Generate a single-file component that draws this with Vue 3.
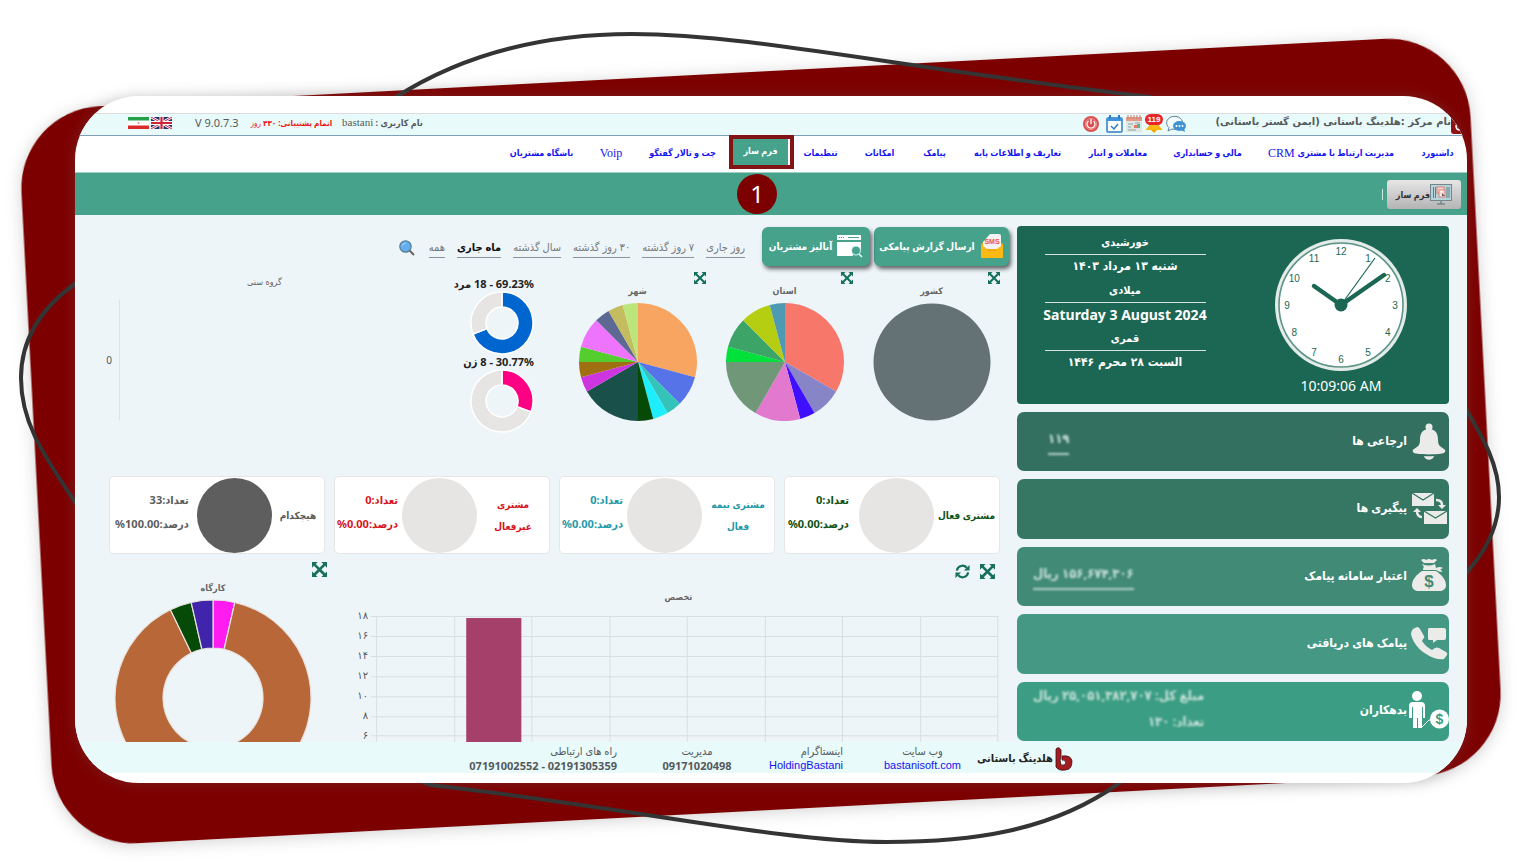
<script setup>
const navItems = [
  { label: 'داشبورد' },
  { label: 'مدیریت ارتباط با مشتری', latin: 'CRM' },
  { label: 'مالی و حسابداری' },
  { label: 'معاملات و انبار' },
  { label: 'تعاریف و اطلاعات پایه' },
  { label: 'پیامک' },
  { label: 'امکانات' },
  { label: 'تنظیمات' },
  { label: 'فرم ساز', active: true },
  { label: 'چت و تالار گفتگو' },
  { label: '', latin: 'Voip' },
  { label: 'باشگاه مشتریان' },
]

const ranges = [
  { label: 'روز جاری' },
  { label: '۷ روز گذشته' },
  { label: '۳۰ روز گذشته' },
  { label: 'سال گذشته' },
  { label: 'ماه جاری', active: true },
  { label: 'همه' },
]

const point = (r, turn) => {
  const a = turn * Math.PI * 2
  return `${(r * Math.sin(a)).toFixed(2)} ${(-r * Math.cos(a)).toFixed(2)}`
}

function slices(parts, outer, inner = 0) {
  const total = parts.reduce((sum, p) => sum + p[0], 0)
  let start = 0
  return parts.map(([value, color]) => {
    const end = start + value / total
    const large = end - start > 0.5 ? 1 : 0
    const back = inner
      ? `L${point(inner, end)} A${inner} ${inner} 0 ${large} 0 ${point(inner, start)}`
      : 'L0 0'
    const d = `M${point(outer, start)} A${outer} ${outer} 0 ${large} 1 ${point(outer, end)} ${back} Z`
    start = end
    return { d, color }
  })
}

const pies = [
  { title: 'کشور', full: '#647275', slices: [] },
  {
    title: 'استان',
    slices: slices([
      [8, '#f7786b'], [2, '#8884c8'], [1, '#3f10ff'], [3, '#e279cf'], [4, '#709878'],
      [1, '#02e03c'], [2, '#3da468'], [2, '#b5ce12'], [1, '#4e9ab2'],
    ], 59),
  },
  {
    title: 'شهر',
    slices: slices([
      [7, '#f7a560'], [2, '#5674e8'], [1, '#35c3b9'], [1, '#1eeefc'], [1, '#064a08'],
      [4, '#1a504a'], [1, '#cd35e0'], [1, '#a06f12'], [1, '#54cd2e'], [2, '#ee74fd'],
      [1, '#5d6993'], [1, '#c4bd60'], [1, '#bce67c'],
    ], 59),
  },
]

const genders = [
  { text: '69.23% - 18 مرد', slices: slices([[69.23, '#0066cf'], [30.77, '#e6e5e4']], 31, 16) },
  { text: '30.77% - 8 زن', slices: slices([[30.77, '#ff0084'], [69.23, '#e6e5e4']], 31, 16) },
]

const workshop = slices([[1, '#ff1cf0'], [25, '#b86838'], [1, '#064a08'], [1, '#4024ab']], 98, 50)

const groups = [
  { name: 'مشتری فعال', count: '0', share: '0.00%', tone: 'green' },
  { name: 'مشتری نیمه فعال', count: '0', share: '0.00%', tone: 'teal', wrap: true },
  { name: 'مشتری غیرفعال', count: '0', share: '0.00%', tone: 'red', wrap: true },
  { name: 'هیچکدام', count: '33', share: '100.00%', tone: 'gray' },
]

const yTicks = ['۱۸', '۱۶', '۱۴', '۱۲', '۱۰', '۸', '۶']

const hours = Array.from({ length: 12 }, (_, i) => {
  const a = ((i + 1) * Math.PI) / 6
  return { n: i + 1, x: 54 * Math.sin(a), y: -54 * Math.cos(a) + 4 }
})

const cards = [
  { id: 'refer', label: 'ارجاعی ها', values: ['۱۱۹'], link: true },
  { id: 'follow', label: 'پیگیری ها', values: [] },
  { id: 'credit', label: 'اعتبار سامانه پیامک', values: ['۱۵۶,۶۷۴,۳۰۶ ریال'], link: true },
  { id: 'inbox', label: 'پیامک های دریافتی', values: [] },
  { id: 'debt', label: 'بدهکاران', values: ['مبلغ کل: ۲۵,۰۵۱,۳۸۲,۷۰۷ ریال', 'تعداد: ۱۳۰'] },
]

const contacts = [
  { title: 'وب سایت', value: 'bastanisoft.com', href: '#' },
  { title: 'اینستاگرام', value: 'HoldingBastani', href: '#', edge: true },
  { title: 'مدیریت', value: '09171020498' },
  { title: 'راه های ارتباطی', value: '07191002552 - 02191305359', edge: true },
]
</script>

<template>
  <div class="stage">
    <svg class="backdrop" viewBox="0 0 1536 864" preserveAspectRatio="none" aria-hidden="true">
      <rect class="slab" x="35.5" y="72" width="1451" height="738" rx="82" transform="rotate(-3 761 441)" />
      <path
        class="loop"
        d="M396 97 C470 50 550 34 632 34 C750 34 900 68 1150 97 C1330 180 1400 300 1467 411 C1483 438 1499 465 1499 497 C1499 528 1484 553 1467 572 C1380 680 1230 700 1118 784 C1050 832 970 842 886 842 C780 842 620 806 430 785 C270 720 150 610 75 502 C40 450 21 420 21 378 C21 335 45 305 76 283 C200 220 300 160 396 97 Z"
      />
    </svg>

    <div class="panel" dir="rtl">
      <header class="topbar">
        <svg class="brand-chip" viewBox="0 0 12 20" aria-hidden="true">
          <path d="M0 0h12v20H3q-3 0-3-3z" fill="#8e1216" />
          <path d="M5 12q1-3 4-3v7q-4 0-4-4z" fill="none" stroke="#fff" stroke-width="1.500" />
        </svg>
        <p class="center-name">نام مرکز :هلدینگ باستانی (ایمن گستر باستانی)</p>
        <div class="tray">
          <button type="button" aria-label="گفتگو">
            <svg viewBox="0 0 20 18" width="20" height="18">
              <path d="M3 12.500 2 16l4-2a8 6.500 0 1 0-3-1.500z" fill="#f4fbfd" stroke="#63809a" stroke-width="1" />
              <ellipse cx="13.500" cy="11" rx="6.500" ry="5" fill="#3f93d4" />
              <path d="M15 15l4 2-1-4z" fill="#3f93d4" />
              <g fill="#fff"><circle cx="10.500" cy="11" r="1" /><circle cx="13.500" cy="11" r="1" /><circle cx="16.500" cy="11" r="1" /></g>
            </svg>
          </button>
          <button type="button" class="bell" aria-label="اعلان ها">
            <svg viewBox="0 0 18 20" width="18" height="20">
              <path d="M4 4h10v8l3 3v1H1v-1l3-3z" fill="#fdb511" />
              <path d="M6 16h6l-3 3z" fill="#f6a300" />
            </svg>
            <span class="count">119</span>
          </button>
          <button type="button" aria-label="رویدادها">
            <svg viewBox="0 0 16 18" width="16" height="18">
              <rect y="2" width="16" height="15" fill="#dfe6e4" />
              <rect y="2" width="16" height="4" fill="#e39a8a" />
              <path d="M2 0v4M5 0v4M8 0v4M11 0v4M14 0v4" stroke="#c87c6a" stroke-width="1" />
              <path d="M2 9h5M2 12h3M9 8h5M2 15h8" stroke="#8fa6a4" stroke-width="1" />
              <path d="M8 10h3v3H8z" fill="#e07a60" /><path d="M11 9h3v4h-3z" fill="#5cae9a" />
            </svg>
          </button>
          <button type="button" aria-label="تقویم">
            <svg viewBox="0 0 17 18" width="17" height="18">
              <rect x="1" y="3" width="15" height="14" rx="1" fill="#fff" stroke="#2b7cc4" stroke-width="1.500" />
              <path d="M1 3h15v3H1z" fill="#3d94dd" />
              <path d="M4 0v4M13 0v4" stroke="#2b7cc4" stroke-width="2" />
              <path d="M5 11l3 3 4-5" fill="none" stroke="#2b7cc4" stroke-width="1.500" />
            </svg>
          </button>
          <button type="button" aria-label="خروج">
            <svg viewBox="0 0 16 16" width="16" height="16">
              <circle cx="8" cy="8" r="8" fill="#dc4f50" />
              <path d="M5.500 5a4 4 0 1 0 5 0M8 3v5" fill="none" stroke="#fff" stroke-width="1.300" />
              <circle cx="8" cy="8" r="5.600" fill="none" stroke="#f0a7a4" stroke-width=".7" />
            </svg>
          </button>
        </div>
        <div class="account">
          <span><b>نام کاربری :</b> <span class="serif">bastani</span></span>
          <span class="expiry"><b>اتمام پشتیبانی: ۴۳۰</b> روز</span>
          <span class="version" dir="ltr">V 9.0.7.3</span>
          <span class="flags">
            <button type="button" aria-label="English">
              <svg viewBox="0 0 21 12" width="21" height="12">
                <rect width="21" height="12" fill="#24346c" />
                <path d="M0 0l21 12M21 0L0 12" stroke="#fff" stroke-width="2.600" />
                <path d="M0 0l21 12M21 0L0 12" stroke="#cf2338" stroke-width="1" />
                <path d="M10.500 0v12M0 6h21" stroke="#fff" stroke-width="4" />
                <path d="M10.500 0v12M0 6h21" stroke="#cf2338" stroke-width="2.200" />
              </svg>
            </button>
            <button type="button" aria-label="فارسی">
              <svg viewBox="0 0 21 12" width="21" height="12">
                <rect width="21" height="12" fill="#fff" />
                <rect width="21" height="3.500" fill="#26a04a" />
                <rect y="8.500" width="21" height="3.500" fill="#db2a2c" />
                <circle cx="10.500" cy="6" r="1" fill="#e08080" />
              </svg>
            </button>
          </span>
        </div>
      </header>

      <nav class="nav">
        <a v-for="(item, i) in navItems" :key="i" href="#" :class="{ active: item.active }">
          <span v-if="item.label">{{ item.label }}</span>
          <span v-if="item.latin" class="latin-word">{{ item.latin }}</span>
          <span v-if="item.active" class="frame" aria-hidden="true"></span>
          <span v-if="item.active" class="step">1</span>
        </a>
      </nav>

      <div class="ribbon">
        <button type="button" class="form-btn">
          <svg viewBox="0 0 22 21" width="22" height="21" aria-hidden="true">
            <rect x=".5" y=".5" width="21" height="16" fill="#b4d4da" stroke="#75868c" />
            <path d="M3.500 3v11M5.500 3v11M17 3v11M19 3v11" stroke="#5f8088" stroke-width="1" />
            <rect x="7" y="3" width="7" height="6" fill="#f3d9d3" stroke="#e07f70" />
            <rect x="9" y="6" width="6" height="7" fill="#fff" fill-opacity=".6" stroke="#e07f70" />
            <path d="M12 9l3 3h-3z" fill="#7b5050" />
            <path d="M11 17v3M7 20h8" stroke="#75868c" stroke-width="1.500" />
          </svg>
          <span>فرم ساز</span>
        </button>
        <span class="divider" aria-hidden="true"></span>
      </div>

      <div class="content">
        <aside class="side">
          <section class="clock-card">
            <div class="clock">
              <svg viewBox="-67 -67 134 134" width="134" height="134" role="img" aria-label="10:09:06">
                <circle r="66" fill="#e4ecea" />
                <circle r="62" fill="#fff" stroke="#5d9485" stroke-width="1.600" />
                <g class="hours">
                  <text v-for="h in hours" :key="h.n" :x="h.x" :y="h.y">{{ h.n }}</text>
                </g>
                <path d="M0 0L34-47" stroke="#1b6753" stroke-width="1.200" />
                <path d="M0 0L43-30M0 0L-27-19" stroke="#1b6753" stroke-width="4.500" stroke-linecap="round" />
                <circle r="6.500" fill="#1b6753" />
              </svg>
              <span class="time" dir="ltr">10:09:06 AM</span>
            </div>
            <dl class="dates">
              <dt>خورشیدی</dt>
              <dd>شنبه ۱۳ مرداد ۱۴۰۳</dd>
              <dt>میلادی</dt>
              <dd class="latin" dir="ltr">Saturday 3 August 2024</dd>
              <dt>قمری</dt>
              <dd>السبت ۲۸ محرم ۱۴۴۶</dd>
            </dl>
          </section>

          <section v-for="card in cards" :key="card.id" class="card" :class="card.id">
            <svg class="card-icon" viewBox="0 0 40 40" width="40" height="40" aria-hidden="true">
              <g v-if="card.id === 'refer'" fill="#ebebea">
                <circle cx="20" cy="5" r="3.500" />
                <path d="M20 7C13 7 11 12 11 18c0 6-3 7-6 9-2 1-2 4 2 4.500 8 1.200 18 1.200 26 0 4-.5 4-3.500 2-4.500-3-2-6-3-6-9 0-6-2-11-9-11z" />
                <path d="M15 34q5 .7 10 0c-1 5-9 5-10 0z" />
              </g>
              <g v-else-if="card.id === 'follow'">
                <rect x="3" y="4" width="22" height="13" fill="#ebebea" />
                <path d="M3 4l11 7 11-7" fill="none" stroke="#367764" stroke-width="1.400" />
                <rect x="15" y="22" width="23" height="13" fill="#ebebea" />
                <path d="M15 22l11.500 7L38 22" fill="none" stroke="#367764" stroke-width="1.400" />
                <path d="M27 11q6 0 6 5M13 28q-5 0-5-6" fill="none" stroke="#ebebea" stroke-width="2.500" />
                <path d="M29 16h8l-4 4zM4 23h8l-4-4z" fill="#ebebea" />
              </g>
              <g v-else-if="card.id === 'credit'" fill="#ebebea">
                <path d="M12 3q3-2 5 0 3-2 6 0 3-2 5 0l-3 3H15z" />
                <path d="M13 7q7 3 13 0l1 4q4-2 7 0-1 1-3 1 2 1 2 3-3 0-6-2H14q0-3 1-3z" />
                <path d="M13 14h14c6 4 10 9 10 14 0 4-3 6-7 6H10c-4 0-7-2-7-6 0-5 4-10 10-14z" />
                <text class="coin dark-coin" x="20" y="30">$</text>
              </g>
              <g v-else-if="card.id === 'inbox'" fill="#ebebea">
                <path d="M4 5l4-2q2 0 3 2l4 7q1 2-1 3l-1 2q4 6 10 9l3-2q2-1 4 0l7 4q2 1 1 3l-3 4q-4 1-10-1C14 30 4 21 2 10q0-3 2-5z" />
                <path d="M20 4h15q2 0 2 2v8q0 2-2 2h-7l-4 3v-3h-4q-1 0-1-2V6q0-2 1-2z" />
              </g>
              <g v-else fill="#fff">
                <circle cx="8" cy="5" r="5" />
                <path d="M4 11h8q4 0 4 4v12h-2V16h-1v21H9V27H8v10H4V16H3v11H0V15q0-4 4-4z" />
                <circle cx="30.500" cy="28" r="9.500" />
                <path d="M13 36l7-7h2" fill="none" stroke="#fff" />
                <text class="coin light-coin" x="30.500" y="33">$</text>
              </g>
            </svg>
            <h2>{{ card.label }}</h2>
            <div class="values" :class="{ link: card.link }">
              <span v-for="v in card.values" :key="v">{{ v }}</span>
            </div>
          </section>
        </aside>

        <main class="main">
          <div class="actions">
            <button type="button" class="action">
              <svg viewBox="0 0 24 26" width="24" height="26" aria-hidden="true">
                <path d="M1 11l11-9 11 9v14H1z" fill="#f6a50e" />
                <path d="M3 9l7-8h9q2 0 2 2v13H3z" fill="#f3f3f3" />
                <path d="M1 12l5 3 3 4 3-2 3 2 3-4 5-3v13H1z" fill="#fdb913" />
                <text class="sms" x="12" y="11">SMS</text>
              </svg>
              <span>ارسال گزارش پیامکی</span>
            </button>
            <button type="button" class="action">
              <svg viewBox="0 0 26 24" width="26" height="24" aria-hidden="true">
                <path d="M0 1h24v5H0zM0 8h24v7a6 6 0 0 0-8 7H0z" fill="#fff" />
                <path d="M2 3.500h5" stroke="#47a28c" stroke-dasharray="1.200 .8" />
                <path d="M11 3.500h11" stroke="#47a28c" />
                <circle cx="19" cy="16.500" r="4.500" fill="#47a28c" stroke="#dff" />
                <path d="M22 20l3 3" stroke="#dff" stroke-width="1.500" />
              </svg>
              <span>آنالیز مشتریان</span>
            </button>
            <div class="ranges">
              <a v-for="r in ranges" :key="r.label" href="#" :class="{ active: r.active }">{{ r.label }}</a>
            </div>
            <button type="button" class="search" aria-label="جستجو">
              <svg viewBox="0 0 16 16" width="16" height="16">
                <path d="M10 10l5 5" stroke="#6a625c" stroke-width="2" />
                <circle cx="6.500" cy="6.500" r="5.700" fill="#62aeee" stroke="#5b7d96" stroke-width="1.200" />
                <path d="M3 6q1-3 4-3" fill="none" stroke="#a9d5fa" />
              </svg>
            </button>
          </div>

          <div class="charts">
            <figure v-for="pie in pies" :key="pie.title" class="pie">
              <button type="button" class="expand" aria-label="بزرگنمایی">
                <svg viewBox="0 0 16 16" width="12" height="12">
                  <path d="M0 0h6L4 2l4 4 4-4-2-2h6v6l-2-2-4 4 4 4 2-2v6h-6l2-2-4-4-4 4 2 2H0v-6l2 2 4-4-4-4-2 2z" fill="#16705c" />
                </svg>
              </button>
              <figcaption>{{ pie.title }}</figcaption>
              <svg viewBox="-59 -59 118 118" width="118" height="118" aria-hidden="true">
                <circle v-if="pie.full" r="58.500" :fill="pie.full" />
                <path v-for="s in pie.slices" :key="s.d" :d="s.d" :fill="s.color" />
              </svg>
            </figure>

            <div class="genders">
              <figure v-for="g in genders" :key="g.text">
                <figcaption>{{ g.text }}</figcaption>
                <svg viewBox="-32 -32 64 64" width="64" height="64" aria-hidden="true">
                  <path v-for="s in g.slices" :key="s.d" :d="s.d" :fill="s.color" stroke="#fff" stroke-width="1.500" />
                </svg>
              </figure>
            </div>

            <figure class="ages">
              <figcaption>گروه سنی</figcaption>
              <div class="axis" dir="ltr"><span>0</span><i></i></div>
            </figure>
          </div>

          <div class="groups">
            <section v-for="g in groups" :key="g.name" class="group" :class="[g.tone, { wrap: g.wrap }]">
              <h3>{{ g.name }}</h3>
              <span class="disc"></span>
              <p><span>تعداد:{{ g.count }}</span><span>درصد:{{ g.share }}</span></p>
            </section>
          </div>

          <div class="lower">
            <figure class="bars">
              <div class="tools">
                <button type="button" aria-label="بزرگنمایی">
                  <svg viewBox="0 0 16 16" width="15" height="15">
                    <path d="M0 0h6L4 2l4 4 4-4-2-2h6v6l-2-2-4 4 4 4 2-2v6h-6l2-2-4-4-4 4 2 2H0v-6l2 2 4-4-4-4-2 2z" fill="#16705c" />
                  </svg>
                </button>
                <button type="button" aria-label="بازخوانی">
                  <svg viewBox="0 0 16 16" width="15" height="15">
                    <path d="M2 7a6 6 0 0 1 10.500-3M14 9a6 6 0 0 1-10.500 3" fill="none" stroke="#16705c" stroke-width="2.400" />
                    <path d="M15.500 1v6h-6zM.5 15V9h6z" fill="#16705c" />
                  </svg>
                </button>
              </div>
              <figcaption>تخصص</figcaption>
              <svg class="plot" viewBox="0 0 660 136" aria-hidden="true">
                <g stroke="#d8dfe2" stroke-width="1">
                  <path v-for="(t, i) in yTicks" :key="t" :d="`M23 ${Math.round(10 + i * 19.9)}.5H649`" />
                  <path v-for="i in 9" :key="i" :d="`M${Math.round(28 + (i - 1) * 77.5)}.5 10V136`" />
                </g>
                <rect x="118" y="12" width="55" height="124" fill="#a5406b" />
                <g class="ticks">
                  <text v-for="(t, i) in yTicks" :key="t" x="20" :y="13 + i * 20">{{ t }}</text>
                </g>
              </svg>
            </figure>
            <figure class="workshop">
              <button type="button" class="expand" aria-label="بزرگنمایی">
                <svg viewBox="0 0 16 16" width="15" height="15">
                  <path d="M0 0h6L4 2l4 4 4-4-2-2h6v6l-2-2-4 4 4 4 2-2v6h-6l2-2-4-4-4 4 2 2H0v-6l2 2 4-4-4-4-2 2z" fill="#16705c" />
                </svg>
              </button>
              <figcaption>کارگاه</figcaption>
              <svg viewBox="-99 -99 198 198" width="198" height="198" aria-hidden="true">
                <path v-for="s in workshop" :key="s.d" :d="s.d" :fill="s.color" stroke="#e8e2dc" stroke-width="1.200" />
              </svg>
            </figure>
          </div>
        </main>
      </div>

      <footer class="footer">
        <div class="brand">
          <svg viewBox="0 0 18 24" width="18" height="24" aria-hidden="true">
            <path d="M1 2q3-3 5 1v5q0 3-1 5l1 5q4 1 5-2-1-4-4-3V9q9-1 10 5 0 9-7 9-6 1-9-3z" fill="#a51d22" stroke="#3c0b0d" stroke-width=".8" />
          </svg>
          <strong>هلدینگ باستانی</strong>
        </div>
        <div v-for="c in contacts" :key="c.title" class="contact" :class="{ edge: c.edge }">
          <span>{{ c.title }}</span>
          <a v-if="c.href" :href="c.href" dir="ltr">{{ c.value }}</a>
          <b v-else dir="ltr">{{ c.value }}</b>
        </div>
      </footer>
    </div>
  </div>
</template>

<style>
body {
  margin: 0;
  background: #fff;
}
</style>

<style scoped>
.stage {
  position: relative;
  box-sizing: border-box;
  display: flex;
  height: 100vh;
  min-height: 864px;
  padding: 96px 69px 81px 75px;
  overflow: hidden;
  font-family: "Noto Sans", "DejaVu Sans Condensed", "DejaVu Sans", sans-serif;
  font-size: 11px;
  color: #55595c;
}
.backdrop {
  position: absolute;
  inset: 0;
  width: 100%;
  height: 100%;
}
.slab {
  fill: #7d0000;
  filter: drop-shadow(0 2px 8px rgba(0, 0, 0, 0.18));
}
.loop {
  fill: none;
  stroke: #343434;
  stroke-width: 4;
}
.panel {
  position: relative;
  flex: 1;
  min-width: 0;
  display: flex;
  flex-direction: column;
  box-sizing: border-box;
  padding: 17px 0 10px;
  overflow: hidden;
  border-radius: 64px;
  background: #fff;
  box-shadow: 0 0 14px rgba(120, 110, 110, 0.3);
}
button {
  padding: 0;
  border: 0;
  background: none;
  font: inherit;
  color: inherit;
  cursor: pointer;
}
a {
  text-decoration: none;
  color: #1414f0;
}
svg {
  display: block;
}
figure,
p,
h2,
h3,
dl,
dd {
  margin: 0;
}

.topbar {
  display: flex;
  align-items: center;
  height: 19px;
  padding: 0 4px 2px 53px;
  border-top: 1px solid #dcdcdc;
  border-bottom: 1px solid #7f9fbb;
  background: #e8fafa;
}
.brand-chip {
  width: 12px;
  height: 20px;
}
.center-name {
  width: 220px;
  padding-bottom: 4px;
  font-family: "DejaVu Sans", sans-serif;
  font-size: 10px;
  font-weight: bold;
  line-height: 16px;
  white-space: nowrap;
}
.tray {
  display: flex;
  align-items: center;
  gap: 3px;
  margin-right: 45px;
}
.bell {
  position: relative;
}
.bell .count {
  position: absolute;
  top: 0;
  left: 0;
  width: 18px;
  border-radius: 6px;
  background: #e8262a;
  color: #fff;
  font: bold 8px/11px "Liberation Sans", sans-serif;
  text-align: center;
}
.tray button:last-child {
  margin-right: 4px;
}
.account {
  display: flex;
  align-items: center;
  gap: 10px;
  margin-right: auto;
  padding-bottom: 2px;
  font-size: 9px;
  white-space: nowrap;
}
.serif {
  font-family: "Liberation Serif", serif;
  font-size: 11px;
}
.expiry {
  color: #f01414;
  font-size: 8px;
}
.version {
  margin-right: 2px;
  font-size: 11px;
}
.flags {
  display: flex;
  gap: 2px;
  margin-right: 13px;
}

.nav {
  position: relative;
  z-index: 1;
  display: grid;
  grid-template-columns: 59fr 154fr 93fr 86fr 115fr 51fr 59fr 59fr 61fr 95fr 48fr 91fr;
  height: 36px;
  padding-left: 421px;
}
.nav a {
  position: relative;
  display: flex;
  align-items: center;
  justify-content: center;
  gap: 3px;
  min-width: 0;
  padding-bottom: 3px;
  font: bold 9px/16px "Liberation Serif", "DejaVu Sans Condensed", "DejaVu Sans", serif;
  white-space: nowrap;
}
.latin-word {
  font-size: 12px;
  font-weight: normal;
}
.nav .active {
  align-self: start;
  height: 30px;
  margin: 0 3px;
  padding: 0;
  background: #47a28c;
  color: #fff;
}
.frame {
  position: absolute;
  inset: -1px -6px -3px -4px;
  border: 4px solid #821416;
}
.step {
  position: absolute;
  top: 38px;
  left: 4px;
  width: 40px;
  height: 40px;
  border-radius: 50%;
  background: #7d0000;
  color: #fff;
  font: 24px/40px "Noto Sans", sans-serif;
  text-align: center;
}

.ribbon {
  display: flex;
  align-items: center;
  gap: 4px;
  height: 42px;
  padding-right: 6px;
  border-top: 1px solid #9fd0c3;
  background: #47a28c;
}
.form-btn {
  display: flex;
  align-items: center;
  height: 29px;
  padding: 0 9px;
  border-radius: 3px;
  background: linear-gradient(#e6e6e6, #b4b4b4);
  color: #333;
  font-size: 9px;
  font-weight: bold;
  white-space: nowrap;
}
.divider {
  width: 1px;
  height: 11px;
  background: #cfe8e0;
}

.content {
  flex: 1;
  min-height: 0;
  display: flex;
  gap: 8px;
  padding: 11px 18px 0 34px;
  overflow: hidden;
  background: #edf5f9;
}
.side {
  flex: 432 1 0;
  display: flex;
  flex-direction: column;
  gap: 8px;
  padding-bottom: 1px;
}
.clock-card {
  display: flex;
  height: 178px;
  border-radius: 4px;
  background: #1b6753;
  color: #fff;
}
.clock {
  flex: 1;
  display: flex;
  flex-direction: column;
  align-items: center;
  padding-top: 12px;
}
.hours {
  font: 10px "Liberation Sans", sans-serif;
  fill: #1b6753;
  text-anchor: middle;
}
.time {
  margin-top: 3px;
  font-size: 14px;
  line-height: 22px;
}
.dates {
  flex: 1;
  display: flex;
  flex-direction: column;
  align-items: center;
  padding-top: 8px;
  font-family: "DejaVu Sans Condensed", "DejaVu Sans", sans-serif;
  font-size: 12px;
  font-weight: bold;
  text-align: center;
}
.dates dt {
  width: 161px;
  height: 20px;
  border-bottom: 1px solid #d5e4df;
  line-height: 18px;
  font-size: 11px;
}
.dates dd {
  height: 27px;
  line-height: 22px;
}
.dates .latin {
  font-family: "Noto Sans", sans-serif;
  font-size: 14px;
  line-height: 24px;
}
.card {
  flex: 1;
  display: flex;
  align-items: center;
  border-radius: 7px;
  color: #fff;
}
.card-icon {
  margin: 0 0 0 2px;
}
.refer { background: #337060; }
.follow { background: #367764; }
.credit { background: #418a76; }
.inbox { background: #459883; }
.debt { background: #3b9e84; }
.card h2 {
  padding-bottom: 2px;
  font-size: 12px;
  line-height: 20px;
  font-weight: bold;
  white-space: nowrap;
}
.coin {
  font: bold 17px "Liberation Sans", sans-serif;
  text-anchor: middle;
}
.dark-coin { fill: #418a76; }
.light-coin { fill: #3b9e84; font-size: 14px; }
.values {
  display: flex;
  flex-direction: column;
  gap: 8px;
  margin: 0 auto 0 16px;
  padding-bottom: 6px;
  font-size: 13px;
  font-weight: bold;
  line-height: 18px;
  white-space: nowrap;
  color: #cbe2db;
  filter: blur(1px);
}
.values.link {
  padding-bottom: 0;
}
.values.link span {
  padding-bottom: 6px;
  border-bottom: 2px solid #b5d3ca;
}
.refer .values {
  margin-left: 31px;
}

.main {
  flex: 900 1 0;
  min-width: 0;
}
.actions {
  display: flex;
  align-items: center;
  height: 40px;
}
.action {
  display: flex;
  align-items: center;
  justify-content: center;
  gap: 5px;
  width: 135px;
  height: 39px;
  margin-left: 4px;
  border-radius: 6px;
  background: #47a28c;
  box-shadow: 2px 3px 4px rgba(0, 0, 0, 0.6);
  color: #fff;
  font-size: 10px;
  font-weight: bold;
  white-space: nowrap;
}
.action + .action {
  width: 108px;
}
.sms {
  font: bold 7px "Liberation Sans", sans-serif;
  fill: #ee5540;
  text-anchor: middle;
}
.ranges {
  display: flex;
  gap: 12px;
  margin: 2px 13px 0 0;
}
.ranges a {
  border-bottom: 1px solid #8c9499;
  color: #74797c;
  font-size: 11px;
  line-height: 20px;
  white-space: nowrap;
}
.ranges .active {
  color: #111;
  font-weight: bold;
}
.search {
  margin: 4px 14px 0 0;
}

.charts {
  display: grid;
  grid-template-columns: 147fr 147fr 147fr 124fr 331fr;
  height: 210px;
  padding-right: 4px;
}
.pie {
  position: relative;
  display: flex;
  flex-direction: column;
  align-items: center;
  padding-top: 17px;
}
figcaption {
  font-size: 9px;
  line-height: 16px;
  font-weight: bold;
  white-space: nowrap;
  color: #666;
}
.pie figcaption {
  padding-bottom: 4px;
}
.pie .expand {
  position: absolute;
  top: 6px;
  right: 5px;
}
.genders {
  padding: 11px 30px 0 0;
}
.genders figure {
  display: flex;
  flex-direction: column;
  align-items: flex-start;
  height: 78px;
}
.genders figcaption {
  color: #222;
  font-size: 11px;
  line-height: 14px;
}
.ages figcaption {
  margin-right: 20px;
  padding-top: 8px;
  text-align: center;
  font-weight: normal;
}
.axis {
  display: flex;
  align-items: center;
  gap: 7px;
  height: 120px;
  margin-top: 10px;
  font-size: 10px;
}
.axis span {
  width: 3px;
  direction: rtl;
}
.axis i {
  width: 1px;
  height: 120px;
  background: #dfe2e4;
}

.groups {
  display: grid;
  grid-template-columns: repeat(4, 1fr);
  gap: 9px;
  padding-right: 9px;
}
.group {
  box-sizing: border-box;
  display: grid;
  grid-template-columns: 66fr 75px 75fr;
  align-items: center;
  height: 78px;
  border: 1px solid #e6e6e6;
  border-radius: 5px;
  background: #fff;
}
.group.wrap {
  grid-template-columns: 73fr 75px 68fr;
}
.group h3 {
  font-size: 10px;
  line-height: 22px;
  text-align: center;
  white-space: nowrap;
}
.group.wrap h3 {
  padding: 0 6px;
  white-space: normal;
}
.group p {
  display: flex;
  flex-direction: column;
  align-items: flex-start;
  padding: 0 10px 6px 0;
  font-size: 11px;
  font-weight: bold;
  line-height: 24px;
  white-space: nowrap;
}
.group.wrap p {
  padding-right: 4px;
}
.gray p {
  padding-right: 8px;
}
.disc {
  width: 75px;
  height: 75px;
  border-radius: 50%;
  background: #e6e5e4;
}
.green { color: #0d5216; }
.teal { color: #1f9aa8; }
.red { color: #d81420; }
.group.gray {
  grid-template-columns: 53fr 75px 88fr;
  color: #5c5c5c;
}
.gray .disc { background: #5e5e5e; }

.lower {
  display: flex;
}
.bars {
  flex: 665 1 0;
  min-width: 0;
  text-align: center;
}
.tools {
  display: flex;
  gap: 10px;
  padding: 10px 14px 0 0;
}
.bars figcaption {
  padding: 10px 0 1px;
}
.plot {
  width: 100%;
}
.ticks {
  font: 10px "DejaVu Sans", sans-serif;
  fill: #55595c;
  direction: ltr;
  text-anchor: end;
}
.workshop {
  position: relative;
  flex: 235 1 0;
  display: flex;
  flex-direction: column;
  align-items: flex-end;
  padding: 26px 0 0 5px;
}
.workshop figcaption {
  width: 198px;
  padding-bottom: 3px;
  text-align: center;
}
.workshop .expand {
  position: absolute;
  top: 8px;
  left: 203px;
}

.footer {
  display: grid;
  grid-template-columns: 100fr 101fr 124fr 102fr 202fr;
  align-items: center;
  height: 31px;
  padding: 0 394px 0 369px;
  background: #e8fafa;
}
.brand {
  display: flex;
  align-items: center;
  gap: 2px;
  color: #222;
  font-size: 11px;
  white-space: nowrap;
}
.brand svg {
  margin-top: 3px;
}
.contact {
  display: flex;
  flex-direction: column;
  align-items: center;
  font-size: 11px;
  line-height: 15px;
  white-space: nowrap;
}
.contact a {
  font-family: "Liberation Sans", sans-serif;
}
.contact.edge {
  align-items: flex-start;
  padding-right: 29px;
}
</style>
